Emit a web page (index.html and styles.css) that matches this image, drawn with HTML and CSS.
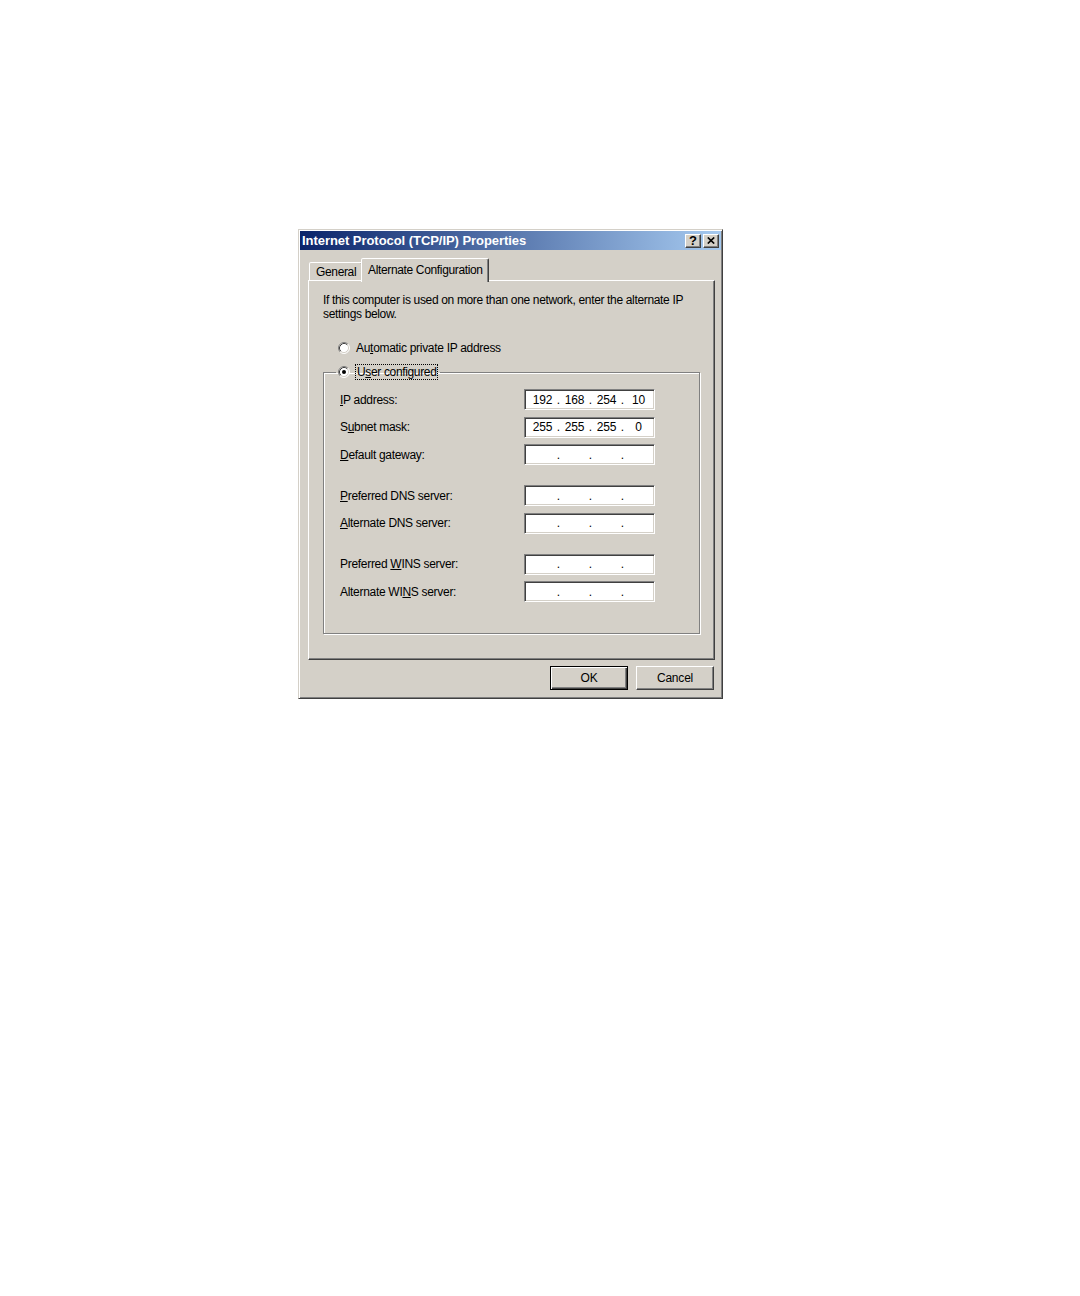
FILE: index.html
```html
<!DOCTYPE html>
<html>
<head>
<meta charset="utf-8">
<title>Internet Protocol (TCP/IP) Properties</title>
<link rel="stylesheet" href="styles.css">
</head>
<body>
<div class="page">
  <div class="dialog">
    <div class="titlebar">
      <span class="title">Internet Protocol (TCP/IP) Properties</span>
      <div class="caption-btns">
        <span class="cbtn help">?</span>
        <span class="cbtn close"><svg width="8" height="7" viewBox="0 0 8 7"><path d="M0.8 0.5 L7.2 6.5 M7.2 0.5 L0.8 6.5" stroke="#000" stroke-width="1.7" fill="none"/></svg></span>
      </div>
    </div>
    <div class="content">
      <div class="tabs">
        <div class="tab general">General</div>
        <div class="tab active">Alternate Configuration</div>
      </div>
      <div class="panel">
        <p class="desc">If this computer is used on more than one network, enter the alternate IP settings below.</p>
        <div class="radio-row">
          <svg class="radio" width="12" height="12" viewBox="0 0 12 12"><circle cx="6" cy="6" r="5" fill="#fff"/><path d="M2.11 9.89 A5.5 5.5 0 0 1 9.89 2.11" stroke="#808080" fill="none"/><path d="M2.82 9.18 A4.5 4.5 0 0 1 9.18 2.82" stroke="#404040" fill="none"/><path d="M9.89 2.11 A5.5 5.5 0 0 1 2.11 9.89" stroke="#fff" fill="none"/><path d="M9.18 2.82 A4.5 4.5 0 0 1 2.82 9.18" stroke="#d4d0c8" fill="none"/></svg>
          <span class="rlabel">Au<u>t</u>omatic private IP address</span>
        </div>
        <fieldset class="group">
          <legend class="legend">
            <svg class="radio" width="12" height="12" viewBox="0 0 12 12"><circle cx="6" cy="6" r="5" fill="#fff"/><path d="M2.11 9.89 A5.5 5.5 0 0 1 9.89 2.11" stroke="#808080" fill="none"/><path d="M2.82 9.18 A4.5 4.5 0 0 1 9.18 2.82" stroke="#404040" fill="none"/><path d="M9.89 2.11 A5.5 5.5 0 0 1 2.11 9.89" stroke="#fff" fill="none"/><path d="M9.18 2.82 A4.5 4.5 0 0 1 2.82 9.18" stroke="#d4d0c8" fill="none"/><circle cx="6" cy="6" r="2" fill="#000"/></svg>
            <span class="focus">U<u>s</u>er configured</span>
          </legend>
          <div class="row">
            <span class="lbl"><u>I</u>P address:</span>
            <div class="ip"><span class="oct">192</span><span class="dot">.</span><span class="oct">168</span><span class="dot">.</span><span class="oct">254</span><span class="dot">.</span><span class="oct">10</span></div>
          </div>
          <div class="row">
            <span class="lbl">S<u>u</u>bnet mask:</span>
            <div class="ip"><span class="oct">255</span><span class="dot">.</span><span class="oct">255</span><span class="dot">.</span><span class="oct">255</span><span class="dot">.</span><span class="oct">0</span></div>
          </div>
          <div class="row">
            <span class="lbl"><u>D</u>efault gateway:</span>
            <div class="ip"><span class="oct"></span><span class="dot">.</span><span class="oct"></span><span class="dot">.</span><span class="oct"></span><span class="dot">.</span><span class="oct"></span></div>
          </div>
          <div class="row sep">
            <span class="lbl"><u>P</u>referred DNS server:</span>
            <div class="ip"><span class="oct"></span><span class="dot">.</span><span class="oct"></span><span class="dot">.</span><span class="oct"></span><span class="dot">.</span><span class="oct"></span></div>
          </div>
          <div class="row">
            <span class="lbl"><u>A</u>lternate DNS server:</span>
            <div class="ip"><span class="oct"></span><span class="dot">.</span><span class="oct"></span><span class="dot">.</span><span class="oct"></span><span class="dot">.</span><span class="oct"></span></div>
          </div>
          <div class="row sep">
            <span class="lbl">Preferred <u>W</u>INS server:</span>
            <div class="ip"><span class="oct"></span><span class="dot">.</span><span class="oct"></span><span class="dot">.</span><span class="oct"></span><span class="dot">.</span><span class="oct"></span></div>
          </div>
          <div class="row">
            <span class="lbl">Alternate WI<u>N</u>S server:</span>
            <div class="ip"><span class="oct"></span><span class="dot">.</span><span class="oct"></span><span class="dot">.</span><span class="oct"></span><span class="dot">.</span><span class="oct"></span></div>
          </div>
        </fieldset>
      </div>
      <div class="buttons">
        <button class="btn default">OK</button>
        <button class="btn">Cancel</button>
      </div>
    </div>
  </div>
</div>
</body>
</html>
```
FILE: styles.css
```css
* { box-sizing: border-box; }

body {
  margin: 0;
  background: #fff;
  font-family: "Liberation Sans", Arial, sans-serif;
  font-size: 12px;
  color: #000;
}

.page {
  padding: 229px 0 0 298px;
}

.dialog {
  width: 425px;
  height: 470px;
  background: #d4d0c8;
  border: 1px solid;
  border-color: #d4d0c8 #404040 #404040 #d4d0c8;
  box-shadow: inset 1px 1px #fff, inset -1px -1px #808080;
  padding: 1px;
  display: flex;
  flex-direction: column;
}

.titlebar {
  height: 19px;
  flex: none;
  background: linear-gradient(to right, #0a246a, #a6caf0);
  display: flex;
  align-items: center;
  justify-content: space-between;
  padding: 0 2px 0 2px;
}

.title {
  color: #fff;
  font-weight: bold;
  font-size: 13px;
  letter-spacing: -0.05px;
  white-space: nowrap;
}

.caption-btns {
  display: flex;
  gap: 2px;
}

.cbtn {
  width: 16px;
  height: 14px;
  background: #d4d0c8;
  border: 1px solid;
  border-color: #fff #404040 #404040 #fff;
  box-shadow: inset -1px -1px #808080;
  display: flex;
  align-items: center;
  justify-content: center;
}

.help {
  font-weight: bold;
  font-size: 13px;
  line-height: 12px;
}

.content {
  flex: 1;
  padding: 8px 6px 0 8px;
  display: flex;
  flex-direction: column;
}

.tabs {
  height: 22px;
  flex: none;
  display: flex;
  align-items: flex-start;
  padding-left: 1px;
  position: relative;
  z-index: 1;
}

.tab {
  background: #d4d0c8;
  border: 1px solid;
  border-bottom: none;
  border-color: #fff #404040 transparent #fff;
  box-shadow: inset -1px 0 #808080;
  border-radius: 2px 2px 0 0;
  display: flex;
  align-items: center;
  white-space: nowrap;
  letter-spacing: -0.35px;
}

.tab.general {
  width: 54px;
  height: 18px;
  margin-top: 4px;
  padding: 1px 0 0 6px;
}

.tab.active {
  width: 128px;
  height: 24px;
  margin-left: -2px;
  padding: 0 0 2px 6px;
}

.panel {
  height: 380px;
  flex: none;
  border: 1px solid;
  border-color: #fff #404040 #404040 #fff;
  box-shadow: inset -1px -1px #808080;
  padding: 12px 14px 0 14px;
}

.desc {
  margin: 0;
  line-height: 14px;
  letter-spacing: -0.34px;
  padding-right: 10px;
}

.radio-row {
  display: flex;
  align-items: center;
  height: 14px;
  margin: 20px 0 0 15px;
  gap: 6px;
}

.radio { flex: none; display: block; }

.rlabel {
  letter-spacing: -0.3px;
  line-height: 14px;
}

.group {
  margin: 9px 0 0 0;
  padding: 9px 0 31px 16px;
  border: 1px solid #808080;
  box-shadow: inset 1px 1px #fff, 1px 1px #fff;
  min-width: 0;
  width: 377px;
}

.legend {
  margin-left: -4px;
  padding: 0 2px;
  display: flex;
  align-items: center;
  gap: 5px;
  height: 16px;
}

.focus {
  border: 1px dotted #000;
  padding: 0 1px;
  line-height: 14px;
  letter-spacing: -0.35px;
}

.row {
  display: flex;
  align-items: center;
  height: 21px;
}

.row + .row { margin-top: 6.5px; }
.row.sep { margin-top: 20px; }

.lbl {
  width: 184px;
  flex: none;
  letter-spacing: -0.3px;
  white-space: nowrap;
}

.ip {
  width: 131px;
  height: 21px;
  background: #fff;
  border: 1px solid;
  border-color: #808080 #fff #fff #808080;
  box-shadow: inset 1px 1px #404040, inset -1px -1px #d4d0c8;
  display: flex;
  align-items: center;
  padding-left: 5.5px;
}

.oct {
  width: 24px;
  text-align: center;
  letter-spacing: -0.2px;
}

.dot {
  width: 8px;
  text-align: center;
}

.buttons {
  display: flex;
  justify-content: flex-end;
  gap: 8px;
  margin: 6px 1px 0 0;
}

.btn {
  width: 78px;
  height: 24px;
  padding: 0;
  font-family: "Liberation Sans", Arial, sans-serif;
  font-size: 12px;
  color: #000;
  background: #d4d0c8;
  border: 1px solid;
  border-color: #fff #404040 #404040 #fff;
  box-shadow: inset -1px -1px #808080;
  letter-spacing: -0.2px;
}

.btn.default {
  border: 1px solid #000;
  box-shadow: inset 1px 1px #fff, inset -1px -1px #404040, inset -2px -2px #808080;
}
```
